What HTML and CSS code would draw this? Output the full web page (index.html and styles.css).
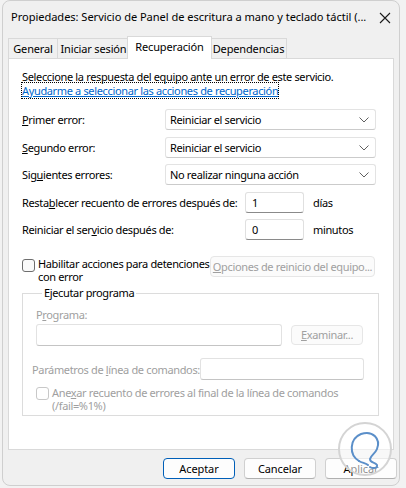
FILE: index.html
```html
<!DOCTYPE html>
<html lang="es">
<head>
<meta charset="utf-8">
<title>Propiedades</title>
<link rel="stylesheet" href="styles.css">
</head>
<body>
<div class="window">
  <div class="titlebar">
    <span class="title">Propiedades: Servicio de Panel de escritura a mano y teclado táctil (...</span>
    <svg class="close" width="12" height="12" viewBox="0 0 12 12"><path d="M1 1 L11 11 M11 1 L1 11" stroke="#1a1a1a" stroke-width="1.1" fill="none"/></svg>
  </div>
  <div class="tabs">
    <div class="tab t1">General</div>
    <div class="tab t2">Iniciar sesión</div>
    <div class="tab t3 active">Recuperación</div>
    <div class="tab t4">Dependencias</div>
  </div>
  <div class="panel">
    <div class="intro">Seleccione la respuesta del equipo ante un error de este servicio.</div>
    <div class="linkwrap"><span class="link">Ayudarme a seleccionar las acciones de recuperación</span></div>

    <div class="row r1">
      <span class="lbl"><u>P</u>rimer error:</span>
      <div class="select"><span>Reiniciar el servicio</span><svg width="10" height="6" viewBox="0 0 10 6"><path d="M0.5 0.5 L5 5 L9.5 0.5" stroke="#606060" fill="none" stroke-width="1"/></svg></div>
    </div>
    <div class="row r2">
      <span class="lbl"><u>S</u>egundo error:</span>
      <div class="select"><span>Reiniciar el servicio</span><svg width="10" height="6" viewBox="0 0 10 6"><path d="M0.5 0.5 L5 5 L9.5 0.5" stroke="#606060" fill="none" stroke-width="1"/></svg></div>
    </div>
    <div class="row r3">
      <span class="lbl">Sig<u>u</u>ientes errores:</span>
      <div class="select"><span>No realizar ninguna acción</span><svg width="10" height="6" viewBox="0 0 10 6"><path d="M0.5 0.5 L5 5 L9.5 0.5" stroke="#606060" fill="none" stroke-width="1"/></svg></div>
    </div>

    <div class="row r4">
      <span class="lbl2">Resta<u>b</u>lecer recuento de errores después de:</span>
      <div class="input small">1</div>
      <span class="unit">días</span>
    </div>
    <div class="row r5">
      <span class="lbl2">Reiniciar el ser<u>v</u>icio después de:</span>
      <div class="input small">0</div>
      <span class="unit">minutos</span>
    </div>

    <div class="chkrow">
      <span class="checkbox"></span>
      <span class="chktext"><span class="ln">Habilitar acciones para detenciones</span><span class="ln">con error</span></span>
      <div class="btn disabled opts"><u>O</u>pciones de reinicio del equipo...</div>
    </div>

    <fieldset class="group">
      <legend>Ejecutar programa</legend>
      <div class="glbl">P<u>r</u>ograma:</div>
      <div class="prow">
        <div class="input dis prog"></div>
        <div class="btn disabled exam"><u>E</u>xaminar...</div>
      </div>
      <div class="parrow">
        <span class="plbl">Parámetros de <u>l</u>ínea de comandos:</span>
        <div class="input dis param"></div>
      </div>
      <div class="anexrow">
        <span class="checkbox dis"></span>
        <span class="anextext"><span class="ln">Ane<u>x</u>ar recuento de errores al final de la línea de comandos</span><span class="ln">(/fail=%1%)</span></span>
      </div>
    </fieldset>
  </div>
  <div class="buttons">
    <div class="btn primary">Aceptar</div>
    <div class="btn">Cancelar</div>
    <div class="btn">Apli<u>c</u>ar</div>
  </div>
  <svg class="watermark" width="56" height="56" viewBox="0 0 56 56">
    <circle cx="28" cy="28" r="26" fill="rgba(255,255,255,0.55)" stroke="#d4d4d4" stroke-width="2"/>
    <path d="M22 40 C12 34 12 18 24 13 C36 9 44 18 40 28 C38 33 34 34 33 38 C33 42 38 41 40 44 C41 47 36 48 33 46" stroke="#5b8fc9" stroke-width="2" fill="none" stroke-linecap="round"/>
    <path d="M22 40 C25 42 29 42 31 44" stroke="#5b8fc9" stroke-width="2" fill="none" stroke-linecap="round"/>
  </svg>
</div>
</body>
</html>
```

FILE: styles.css
```css
* { box-sizing: border-box; }
html, body { margin: 0; padding: 0; }
body {
  width: 406px;
  height: 488px;
  background: #f2f2f2;
  font-family: "Noto Sans", "Liberation Sans", sans-serif;
  font-size: 11px;
  letter-spacing: -0.35px;
  color: #000;
  overflow: hidden;
}
u { text-decoration: underline; text-underline-offset: 1px; }

.window {
  position: relative;
  margin-left: 2px;
  width: 398px;
  height: 486px;
  background: #f0f0f0;
  border: 1px solid #cfcfcf;
  border-radius: 8px;
  padding: 0 5px;
}

.titlebar {
  height: 37px;
  display: flex;
  align-items: flex-start;
  padding-top: 8px;
  padding-left: 3px;
}
.title { font-size: 11.1px; letter-spacing: -0.05px; white-space: nowrap; flex: 1; line-height: 16px; }
.close { margin-top: 3px; margin-right: 3px; }

.tabs {
  display: flex;
  height: 20px;
  align-items: flex-end;
  position: relative;
  z-index: 2;
  letter-spacing: -0.15px;
}
.tab {
  height: 20px;
  border: 1px solid #d9d9d9;
  border-bottom: none;
  background: #f0f0f0;
  line-height: 19px;
  text-align: center;
  white-space: nowrap;
  margin-right: -1px;
}
.t1 { width: 50px; }
.t2 { width: 73px; }
.t4 { width: 77px; }
.tab.active {
  height: 23px;
  background: #fff;
  margin-left: -2px;
  margin-right: -2px;
  margin-bottom: -1px;
  width: 85px;
  line-height: 19px;
  position: relative;
  z-index: 3;
}

.panel {
  height: 392px;
  background: #fff;
  border: 1px solid #d9d9d9;
  padding: 11px 17px 0 13px;
}
.intro, .linkwrap { line-height: 14px; white-space: nowrap; }
.link {
  color: #0066cc;
  text-decoration: underline;
  outline: 1px dotted #000;
  outline-offset: 0;
}

.row { display: flex; align-items: center; height: 21px; }
.r1 { margin-top: 11px; }
.r2 { margin-top: 7px; }
.r3 { margin-top: 6px; }
.r4 { margin-top: 7px; }
.r5 { margin-top: 6px; }
.lbl { width: 145px; white-space: nowrap; }
.lbl2 { width: 223px; white-space: nowrap; }

.select {
  flex: 0 0 211px;
  height: 21px;
  border: 1px solid #e3e3e3;
  border-bottom-color: #cbcbcb;
  border-radius: 3px;
  background: #fff;
  display: flex;
  align-items: center;
  justify-content: space-between;
  padding: 0 6px 0 4px;
  white-space: nowrap;
}

.input {
  height: 21px;
  background: #fff;
  border: 1px solid #e0e0e0;
  border-bottom-color: #8a8a8a;
  border-radius: 3px;
  padding: 0 6px;
  line-height: 19px;
}
.input.small { width: 59px; }
.unit { margin-left: 9px; }
.input.dis { border-color: #e2e2e2; border-bottom-color: #c4c4c4; background: #fff; }

.ln { display: block; height: 13px; line-height: 13px; white-space: nowrap; }

.chkrow {
  display: flex;
  align-items: flex-start;
  margin-top: 16px;
  height: 28px;
}
.checkbox {
  flex: 0 0 13px;
  width: 13px;
  height: 13px;
  border: 1px solid #6e6e6e;
  border-radius: 3px;
  background: #fafafa;
  margin-top: 3px;
}
.chktext { margin-left: 3px; width: 172px; margin-top: 1px; }
.btn {
  height: 21px;
  border: 1px solid #d0d0d0;
  border-bottom-color: #b8b8b8;
  border-radius: 4px;
  background: #fdfdfd;
  text-align: center;
  line-height: 19px;
  white-space: nowrap;
}
.btn.disabled {
  color: #a0a0a0;
  border-color: #e6e6e6;
  background: #fbfbfb;
}
.opts { width: 165px; }

.group {
  margin: 2px 0 0 0;
  width: 357px;
  height: 130px;
  border: 1px solid #dcdcdc;
  padding: 0 0 0 13px;
}
.group legend {
  padding: 0 2px;
  margin-left: 6px;
  line-height: 14px;
  color: #000;
}
.glbl { color: #a0a0a0; margin-top: 8px; line-height: 14px; }
.prow { display: flex; align-items: center; margin-top: 2px; }
.prog { width: 246px; height: 22px; }
.exam { width: 72px; height: 20px; margin-left: 9px; line-height: 18px; }
.parrow { display: flex; align-items: center; margin-top: 12px; margin-left: -4px; }
.plbl { color: #a0a0a0; width: 168px; white-space: nowrap; }
.param { width: 164px; height: 22px; }
.anexrow { display: flex; align-items: flex-start; margin-top: 6px; }
.checkbox.dis { border-color: #c8c8c8; background: #fff; margin-top: 1px; }
.anextext { color: #a0a0a0; margin-left: 3px; }

.buttons {
  display: flex;
  justify-content: flex-end;
  gap: 9px;
  margin-top: 8px;
  margin-right: -3px;
  letter-spacing: -0.1px;
}
.buttons .btn { width: 72px; height: 21px; border-color: #d0d0d0; border-bottom-color: #b0b0b0; }
.buttons .btn.primary { border: 1px solid #005fb8; }

.watermark { position: absolute; left: 334px; top: 420px; }
```
